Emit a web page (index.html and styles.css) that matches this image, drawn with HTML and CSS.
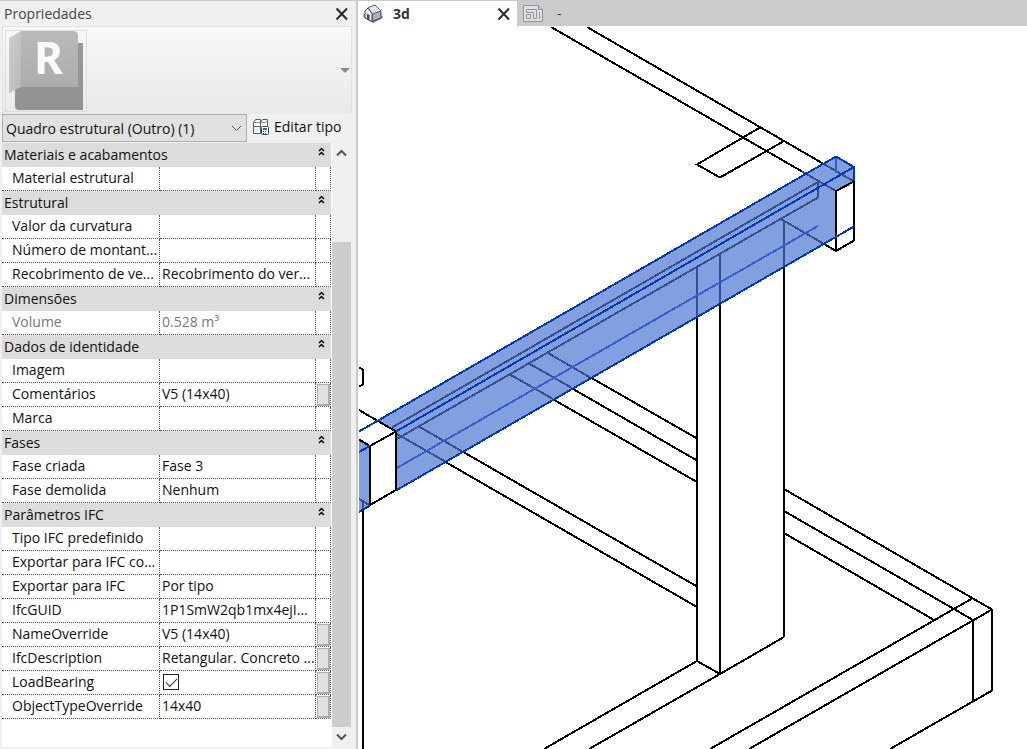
FILE: index.html
```html
<!DOCTYPE html>
<html lang="pt-BR">
<head>
<meta charset="utf-8">
<title>Propriedades - 3d</title>
<link rel="stylesheet" href="styles.css">
</head>
<body>
<div class="app">
  <aside class="panel">
    <header class="panel-head">
      <h1 class="panel-title">Propriedades</h1>
      <button class="close" type="button" aria-label="Fechar painel">
        <svg width="14" height="14" viewBox="0 0 14 14"><path d="M1.5 1.5 12 12.5M12 1.5 1.5 12.5"/></svg>
      </button>
    </header>
    <button class="type-picker" type="button" aria-label="Seletor de tipo">
      <span class="thumb">
        <svg width="80" height="80" viewBox="0 0 80 80">
          <defs>
            <linearGradient id="face" x1="0" y1="0" x2="0" y2="1"><stop offset="0" stop-color="#b9b9b9"/><stop offset="1" stop-color="#acacac"/></linearGradient>
            <linearGradient id="side" x1="0" y1="0" x2="1" y2="1"><stop offset="0" stop-color="#cdcdcd"/><stop offset="1" stop-color="#b9b9b9"/></linearGradient>
            <linearGradient id="back" x1="0" y1="0" x2="0" y2="1"><stop offset="0" stop-color="#999"/><stop offset="1" stop-color="#929292"/></linearGradient>
          </defs>
          <path fill="url(#back)" d="M9 50V75q0 4 4 4H77V12H60V50Z"/>
          <path fill="url(#side)" d="M3 7 15 0V56L3 62Z"/>
          <path fill="url(#face)" d="M15 0H67q5 0 5 5V56H15Z"/>
          <text class="logo-letter" x="28" y="43">R</text>
        </svg>
      </span>
      <svg class="picker-arrow" width="10" height="5" viewBox="0 0 10 5"><path d="M0 0H10L5 5Z"/></svg>
    </button>
    <div class="filter-row">
      <div class="combo">
        <select class="combo-select" aria-label="Categoria"><option>Quadro estrutural (Outro) (1)</option></select>
        <svg class="combo-arrow" width="11" height="7" viewBox="0 0 11 7"><path d="M1 1 5.500 5.500 10 1"/></svg>
      </div>
      <button class="edit-type" type="button">
        <svg width="17" height="17" viewBox="0 0 17 17">
          <path fill="#fff" stroke="#555b66" d="M.5 3.500 2.500 .5H7.500V7.500H.5ZM7.500 7.500V3.500L9.500 .5H14.500V7M.5 7.500V14.500H7.500V7.500"/>
          <path fill="none" stroke="#8c929c" d="M1 3.500H7M8 3.500H12.500L14.500 1"/>
          <rect x="8.500" y="7.500" width="7" height="8" rx="1" fill="#fff" stroke="#3c424d"/>
          <rect x="10" y="9" width="4" height="2" fill="#1d69c2"/>
          <path stroke="#3c424d" stroke-dasharray="1 1" d="M10 12.500H14M10 14.500H14"/>
        </svg>
        <span>Editar tipo</span>
      </button>
    </div>
    <div class="grid-area">
      <div class="grid-body">
        <table class="props" aria-label="Propriedades da instância">
          <colgroup><col class="col-name"><col class="col-value"><col class="col-tool"></colgroup>
          <tbody>
            <tr class="group"><th colspan="3"><button type="button">Materiais e acabamentos<svg width="7" height="9" viewBox="0 0 7 9"><path d="M1 4 3.500 1.500 6 4M1 8 3.500 5.500 6 8"/></svg></button></th></tr>
            <tr><th>Material estrutural</th><td></td><td></td></tr>
            <tr class="group"><th colspan="3"><button type="button">Estrutural<svg width="7" height="9" viewBox="0 0 7 9"><path d="M1 4 3.500 1.500 6 4M1 8 3.500 5.500 6 8"/></svg></button></th></tr>
            <tr><th>Valor da curvatura</th><td></td><td></td></tr>
            <tr><th>Número de montant...</th><td></td><td></td></tr>
            <tr><th>Recobrimento de ve...</th><td>Recobrimento do ver...</td><td></td></tr>
            <tr class="group"><th colspan="3"><button type="button">Dimensões<svg width="7" height="9" viewBox="0 0 7 9"><path d="M1 4 3.500 1.500 6 4M1 8 3.500 5.500 6 8"/></svg></button></th></tr>
            <tr class="readonly"><th>Volume</th><td>0.528 m³</td><td></td></tr>
            <tr class="group"><th colspan="3"><button type="button">Dados de identidade<svg width="7" height="9" viewBox="0 0 7 9"><path d="M1 4 3.500 1.500 6 4M1 8 3.500 5.500 6 8"/></svg></button></th></tr>
            <tr><th>Imagem</th><td></td><td></td></tr>
            <tr><th>Comentários</th><td>V5 (14x40)</td><td><button class="assoc" type="button" aria-label="Associar Comentários"></button></td></tr>
            <tr><th>Marca</th><td></td><td></td></tr>
            <tr class="group"><th colspan="3"><button type="button">Fases<svg width="7" height="9" viewBox="0 0 7 9"><path d="M1 4 3.500 1.500 6 4M1 8 3.500 5.500 6 8"/></svg></button></th></tr>
            <tr><th>Fase criada</th><td>Fase 3</td><td></td></tr>
            <tr><th>Fase demolida</th><td>Nenhum</td><td></td></tr>
            <tr class="group"><th colspan="3"><button type="button">Parâmetros IFC<svg width="7" height="9" viewBox="0 0 7 9"><path d="M1 4 3.500 1.500 6 4M1 8 3.500 5.500 6 8"/></svg></button></th></tr>
            <tr><th>Tipo IFC predefinido</th><td></td><td></td></tr>
            <tr><th>Exportar para IFC co...</th><td></td><td></td></tr>
            <tr><th>Exportar para IFC</th><td>Por tipo</td><td></td></tr>
            <tr><th>IfcGUID</th><td>1P1SmW2qb1mx4ejI...</td><td></td></tr>
            <tr><th>NameOverride</th><td>V5 (14x40)</td><td><button class="assoc" type="button" aria-label="Associar NameOverride"></button></td></tr>
            <tr><th>IfcDescription</th><td>Retangular. Concreto ...</td><td><button class="assoc" type="button" aria-label="Associar IfcDescription"></button></td></tr>
            <tr><th><label for="load-bearing">LoadBearing</label></th><td><input class="check" id="load-bearing" type="checkbox" checked></td><td><button class="assoc" type="button" aria-label="Associar LoadBearing"></button></td></tr>
            <tr><th>ObjectTypeOverride</th><td>14x40</td><td><button class="assoc" type="button" aria-label="Associar ObjectTypeOverride"></button></td></tr>
          </tbody>
        </table>
      </div>
      <div class="scroll">
        <button type="button" aria-label="Rolar para cima"><svg width="11" height="8" viewBox="0 0 11 8"><path d="M1 6.500 5.500 2 10 6.500"/></svg></button>
        <div class="track"><div class="handle"></div></div>
        <button type="button" aria-label="Rolar para baixo"><svg width="11" height="8" viewBox="0 0 11 8"><path d="M1 1.500 5.500 6 10 1.500"/></svg></button>
      </div>
    </div>
  </aside>
  <main class="view">
    <nav class="tabs" aria-label="Vistas">
      <div class="tab active">
        <button class="tab-name" type="button">
          <svg width="20" height="19" viewBox="0 0 20 19">
            <path fill="#b8bcc2" stroke="#747981" d="M1 10 10 17.500 19 12V14L10 18.500 1 13Z"/>
            <path fill="#a9b0ba" stroke="#41464f" d="M9 9 14 3 18 8V14L9 17.500Z"/>
            <path fill="#eceef1" stroke="#41464f" d="M2 7 5 4 9 9.500V17.500L2 14Z"/>
            <path fill="#e1e5e9" stroke="#565c66" d="M5 3.500 12 1 18 7 9.500 10Z"/>
            <path fill="#41464f" d="M4 9.500 6.500 11V16.500L4 15Z"/>
          </svg>
          <span>3d</span>
        </button>
        <button class="close" type="button" aria-label="Fechar vista 3d">
          <svg width="14" height="14" viewBox="0 0 14 14"><path d="M1.500 1.500 12 12.500M12 1.500 1.500 12.500"/></svg>
        </button>
      </div>
      <div class="tab">
        <button class="tab-name" type="button">
          <svg width="20" height="17" viewBox="0 0 20 17">
            <path fill="#dcdee0" stroke="#8f9398" d="M.5 .5H15.500L19.500 4.500V16.500H.5Z"/>
            <path fill="#c1c4c8" stroke="#8f9398" d="M15.500 .5V4.500H19.500"/>
            <path fill="none" stroke="#92989f" d="M3.500 4.500H13.500V13.500H10.500V7.500H3.500ZM3.500 9.500H7.500V13.500H3.500ZM16.500 7V14"/>
          </svg>
          <span>-</span>
        </button>
      </div>
    </nav>
    <svg class="canvas" viewBox="359 27 668 722" preserveAspectRatio="xMinYMin slice" role="img" aria-label="Vista 3d com viga selecionada">
      <g class="edge">
        <path d="M551 27 836 191M587 27 854 181.500"/>
        <path d="M760 127.500 697 164.500 720 177.500 784 141"/>
        <path d="M359 367.500 363 369.500V384.500L359 386.500"/>
        <path d="M363 502V749"/>
        <path d="M780 218.500 836 251"/>
        <path d="M697 266V661M720 253V674M784 221V637"/>
        <path d="M544 749 697 661 720 674 784 637M589 749 720 674"/>
        <path d="M548 353 697 438.500M529 363.500 697 460.500M510 374.500 697 482"/>
        <path d="M419 426.500 697 586.500M403 437.500 697 607"/>
        <path d="M784 489 992 609.500V690.500L890 749M784 511 973 620V701M784 533 934 620"/>
        <path d="M710 749 973 598M749 749 992 609.500"/>
      </g>
      <path class="beam" d="M377 421.500 836 156.500 854 167V181.500L836 191V237L396 490V431Z"/>
      <path class="beam" d="M359 440 370 446V505L359 511.500Z"/>
      <g class="hidden-edge">
        <path d="M802 171.500 836 191M823 163.500 854 181.500"/>
        <path d="M392 427.500 818 182V197.500L396 439.500"/>
        <path d="M780 218.500 824 244"/>
        <path d="M697 266V317M720 253V304M784 221V267"/>
        <path d="M548 353 591 378M529 363.500 572 388M510 374.500 553 399"/>
        <path d="M419 426.500 463 452M396 433.500 446 462"/>
        <path d="M359 499 370 505.500M363 502V509"/>
      </g>
      <g class="inner-edge"><path d="M396 468.500 818 226M836 157V173"/></g>
      <path class="solid" d="M359 409.500 396 431V490L370 505V446L359 440Z"/>
      <g class="edge">
        <path d="M359 410 396 431.500V490L370 505V446L359 439.500M370 446 396 431.500"/>
        <path class="solid-edge" d="M836 191 854 181.500V240.500L836 251Z"/>
      </g>
      <g class="selected-edge">
        <path d="M359 431.500 836 156.500 854 167V181"/>
        <path d="M396 431.500 854 167M359 452 370 446"/>
        <path d="M396 490.500 854 226.500M359 512 370 505.500"/>
      </g>
    </svg>
  </main>
</div>
</body>
</html>
```
FILE: styles.css
```css
* { box-sizing: border-box; }

body {
  margin: 0;
  color: #111;
  font: 14px/20px "Open Sans", "Noto Sans", sans-serif;
}

button, select {
  margin: 0;
  padding: 0;
  border: 0;
  background: none;
  color: inherit;
  font: inherit;
}

.app {
  display: flex;
  height: 100vh;
  overflow: hidden;
  border-top: 1px solid #c9c9c9;
  background: #fff;
}

.panel {
  display: flex;
  flex: none;
  flex-direction: column;
  width: 358px;
  padding: 0 3px 2px 2px;
  border-right: 2px solid #c9c9c9;
  background: #f0f0f0;
}

.panel-head {
  display: flex;
  align-items: center;
  justify-content: space-between;
  height: 25px;
  padding: 0 4px 0 2px;
}

.panel-title {
  margin: 0;
  color: #444;
  font-size: 14px;
  font-weight: 400;
}

.close { display: flex; }

.close path {
  fill: none;
  stroke: #2b2b2b;
  stroke-width: 2;
}

.type-picker {
  display: flex;
  align-items: center;
  justify-content: space-between;
  height: 88px;
  margin-right: 1px;
  padding: 2px 1px 2px 2px;
  border: 1px solid #e2e2e2;
  border-bottom: 0;
  background: linear-gradient(#f8f8f8, #e9e9e9);
}

.thumb {
  display: flex;
  border: 1px solid #dcdcdc;
}

.thumb svg { overflow: visible; }

.logo-letter {
  fill: #fafafa;
  font: 700 44px "Noto Sans", sans-serif;
}

.picker-arrow { fill: #8c8c8c; }

.filter-row {
  display: flex;
  gap: 6px;
  height: 29px;
}

.combo {
  position: relative;
  width: 245px;
  height: 28px;
}

.combo-select {
  width: 100%;
  height: 28px;
  padding: 1px 24px 0 3px;
  border: 1px solid #adadad;
  border-radius: 0;
  background: #e1e1e1;
  appearance: none;
}

.combo-arrow {
  position: absolute;
  top: 11px;
  right: 5px;
  fill: none;
  stroke: #555;
  pointer-events: none;
}

.edit-type {
  display: flex;
  align-items: center;
  gap: 4px;
  height: 26px;
}

.grid-area {
  display: flex;
  flex: 1;
  min-height: 0;
}

.grid-body {
  flex: 1;
  min-width: 0;
  overflow: hidden;
  padding-right: 1px;
  background: #fff;
}

.props {
  width: 100%;
  border-spacing: 0;
  table-layout: fixed;
}

.col-name { width: 158px; }
.col-tool { width: 15px; }

.props th, .props td {
  height: 24px;
  padding: 0 0 2px 2px;
  overflow: hidden;
  border-right: 1px dotted #555;
  border-bottom: 1px dotted #555;
  font-weight: 400;
  line-height: 20px;
  text-align: left;
  white-space: nowrap;
}

.props th { padding-left: 10px; }
.props td:last-child { padding: 0; }

.props .group th {
  padding: 0;
  border: 0;
  background: #dcdcdc;
}

.group button {
  display: flex;
  justify-content: space-between;
  width: 100%;
  height: 24px;
  padding: 2px 6px 2px 2px;
}

.group svg {
  margin-top: 2px;
  fill: none;
  stroke: #000;
  stroke-width: 1.5;
}

.props .readonly th, .props .readonly td {
  border-color: #555;
  color: #777;
}

.assoc {
  display: block;
  width: 13px;
  height: 22px;
  margin-left: 1px;
  border: solid #adadad;
  border-width: 1px 2px 2px 1px;
  background: #e1e1e1;
}

.check {
  display: block;
  width: 16px;
  height: 16px;
  margin: 0 0 0 1px;
  border: 1px solid #222;
  background: #fff;
  appearance: none;
}

.check:checked::after {
  content: "";
  display: block;
  width: 10px;
  height: 5px;
  margin: 3px 0 0 2px;
  border: solid #333;
  border-width: 0 0 1px 1px;
  transform: rotate(-45deg);
}

.scroll {
  display: flex;
  flex-direction: column;
  width: 19px;
  margin-right: 2px;
}

.scroll button {
  display: flex;
  align-items: center;
  justify-content: center;
  height: 20px;
}

.scroll path {
  fill: none;
  stroke: #555;
  stroke-width: 2;
}

.track {
  display: flex;
  flex: 1;
  align-items: flex-end;
}

.handle {
  width: 100%;
  height: 86%;
  background: #cdcdcd;
}

.view {
  display: flex;
  flex: 1;
  flex-direction: column;
  min-width: 0;
}

.tabs {
  display: flex;
  height: 25px;
  background: #cbcbcb;
}

.tab {
  display: flex;
  align-items: center;
  padding: 0 6px;
  color: #444;
}

.tab.active {
  justify-content: space-between;
  width: 159px;
  padding: 0 6px 0 5px;
  background: #fff;
}

.active .tab-name {
  color: #333;
  font-weight: 700;
}

.tab-name {
  display: flex;
  align-items: center;
  gap: 10px;
}

.tab:not(.active) .tab-name { gap: 14px; }

.canvas {
  flex: 1;
  min-height: 0;
  margin: 1px 0 0 1px;
}

.canvas path {
  fill: none;
  shape-rendering: crispEdges;
}

.canvas .beam { fill: #829fdf; }
.canvas .solid, .canvas .solid-edge { fill: #fff; }
.edge { stroke: #000; stroke-width: 2; }
.hidden-edge { stroke: #35508f; stroke-width: 2; }
.inner-edge { stroke: #3560c8; stroke-width: 2; }
.selected-edge { stroke: #0038b8; stroke-width: 2; }
```
